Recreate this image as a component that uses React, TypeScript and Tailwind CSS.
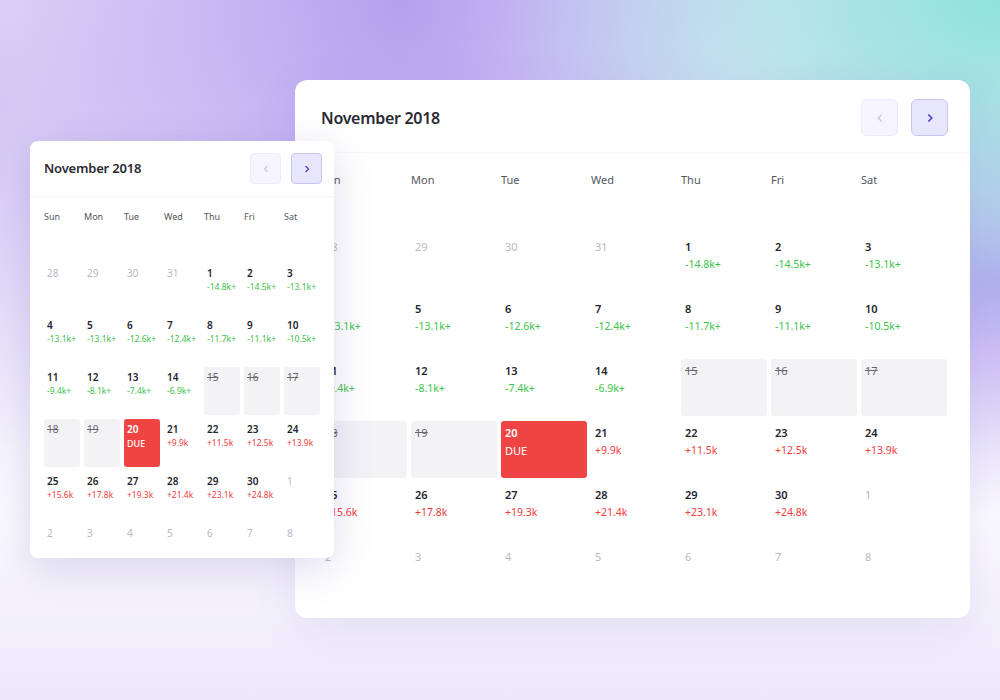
import React from 'react';

type Cell = { d: number; muted?: boolean; val?: string; tone?: 'g' | 'r'; off?: boolean; due?: boolean };

const neg = ['-14.8k+', '-14.5k+', '-13.1k+', '-13.1k+', '-13.1k+', '-12.6k+', '-12.4k+', '-11.7k+', '-11.1k+', '-10.5k+', '-9.4k+', '-8.1k+', '-7.4k+', '-6.9k+'];
const pos: Record<number, string> = { 21: '+9.9k', 22: '+11.5k', 23: '+12.5k', 24: '+13.9k', 25: '+15.6k', 26: '+17.8k', 27: '+19.3k', 28: '+21.4k', 29: '+23.1k', 30: '+24.8k' };

const cells: Cell[] = [
  ...[28, 29, 30, 31].map(d => ({ d, muted: true })),
  ...Array.from({ length: 30 }, (_, i) => {
    const d = i + 1;
    if (d <= 14) return { d, val: neg[i], tone: 'g' as const };
    if (d >= 15 && d <= 19) return { d, off: true };
    if (d === 20) return { d, due: true };
    return { d, val: pos[d], tone: 'r' as const };
  }),
  ...[1, 2, 3, 4, 5, 6, 7, 8].map(d => ({ d, muted: true })),
];

const DAYS = ['Sun', 'Mon', 'Tue', 'Wed', 'Thu', 'Fri', 'Sat'];

function Chevron({ dir, size }: { dir: 'l' | 'r'; size: number }) {
  return (
    <svg width={size} height={size} viewBox="0 0 10 10" fill="none" stroke="currentColor" strokeWidth="1.4" strokeLinecap="round" strokeLinejoin="round">
      {dir === 'l' ? <path d="M6 2.5 3.5 5 6 7.5" /> : <path d="M4 2.5 6.5 5 4 7.5" />}
    </svg>
  );
}

function Calendar({ big }: { big?: boolean }) {
  return (
    <div className={big ? 'w-[675px] h-[538px] bg-white rounded-xl shadow-[0_10px_40px_rgba(120,100,200,0.12)]' : 'w-[304px] h-[417px] bg-white rounded-lg shadow-[0_10px_40px_rgba(80,60,160,0.18)]'}>
      <div className={big ? 'flex items-center justify-between h-[73px] pl-[26px] pr-[22px] pt-[3px] border-b border-gray-50' : 'flex items-center justify-between h-[56px] pl-[14px] pr-[12px] border-b border-gray-100'}>
        <div className={big ? 'text-[16px] font-semibold text-[#2a2a33] tracking-[-0.3px]' : 'text-[13px] font-semibold text-[#2a2a33] tracking-[-0.2px]'}>November 2018</div>
        <div className={big ? 'flex gap-[13px]' : 'flex gap-[10px]'}>
          <div className={big ? 'w-[37px] h-[37px] rounded-md border border-[#ecebfb] bg-[#f6f5ff] text-[#c9c6f0] flex items-center justify-center' : 'w-[31px] h-[31px] rounded-[4px] border border-[#ecebfb] bg-[#f6f5ff] text-[#c9c6f0] flex items-center justify-center'}>
            <Chevron dir="l" size={big ? 12 : 10} />
          </div>
          <div className={big ? 'w-[37px] h-[37px] rounded-md border border-[#c9c4f3] bg-[#e8e6fc] text-[#4b44c9] flex items-center justify-center' : 'w-[31px] h-[31px] rounded-[4px] border border-[#c9c4f3] bg-[#e8e6fc] text-[#4b44c9] flex items-center justify-center'}>
            <Chevron dir="r" size={big ? 12 : 10} />
          </div>
        </div>
      </div>
      <div className={big ? 'px-[26px]' : 'px-[14px]'}>
        <div className={big ? 'grid grid-cols-[repeat(7,86px)] gap-x-[4px] pt-[19px] h-[82px]' : 'grid grid-cols-[repeat(7,36px)] gap-x-[4px] pt-[13px] h-[66px]'}>
          {DAYS.map(d => (
            <div key={d} className={big ? 'text-[11px] text-[#555560]' : 'text-[9px] text-[#555560]'}>{d}</div>
          ))}
        </div>
        <div className={big ? 'grid grid-cols-[repeat(7,86px)] auto-rows-[57px] gap-x-[4px] gap-y-[5px]' : 'grid grid-cols-[repeat(7,36px)] auto-rows-[48px] gap-x-[4px] gap-y-[4px]'}>
          {cells.map((c, i) => (
            <div
              key={i}
              className={
                (big ? 'rounded-[3px] px-[4px] pt-[4px] ' : 'rounded-[3px] px-[3px] pt-[3px] ') +
                (c.due ? 'bg-[#ef4444] text-white' : c.off ? 'bg-[#f3f3f6] text-[#666670]' : 'text-[#24242c]')
              }
            >
              <div className={(big ? 'text-[11px] ' : 'text-[10px] ') + (c.muted ? 'text-[#b8b8c0] font-normal' : 'font-semibold') + (c.off ? ' line-through !font-normal' : '')}>
                {c.d}
              </div>
              {c.val && (
                <div className={(big ? 'text-[10.5px] mt-[1px] ' : 'text-[8.5px] ') + (c.tone === 'g' ? 'text-[#3cc24a]' : 'text-[#ef3b3b]')}>{c.val}</div>
              )}
              {c.due && <div className={big ? 'text-[11px] mt-[1px]' : 'text-[9px] font-medium'}>DUE</div>}
            </div>
          ))}
        </div>
      </div>
    </div>
  );
}

export default function App() {
  return (
    <div
      className="relative w-[1000px] h-[700px] overflow-hidden font-['Inter',sans-serif] bg-[radial-gradient(ellipse_at_100%_0%,#8fe3dc_0%,transparent_35%),radial-gradient(ellipse_at_40%_0%,#b3a0ef_0%,transparent_45%),radial-gradient(ellipse_at_0%_15%,#d3c7f5_0%,transparent_50%),radial-gradient(ellipse_at_100%_40%,#b7a6f0_0%,transparent_40%),linear-gradient(180deg,#e9e3fb_0%,#ffffff_65%,#ede8fb_100%)]"
    >
      <div className="absolute left-[295px] top-[80px]">
        <Calendar big />
      </div>
      <div className="absolute left-[30px] top-[141px]">
        <Calendar />
      </div>
    </div>
  );
}
